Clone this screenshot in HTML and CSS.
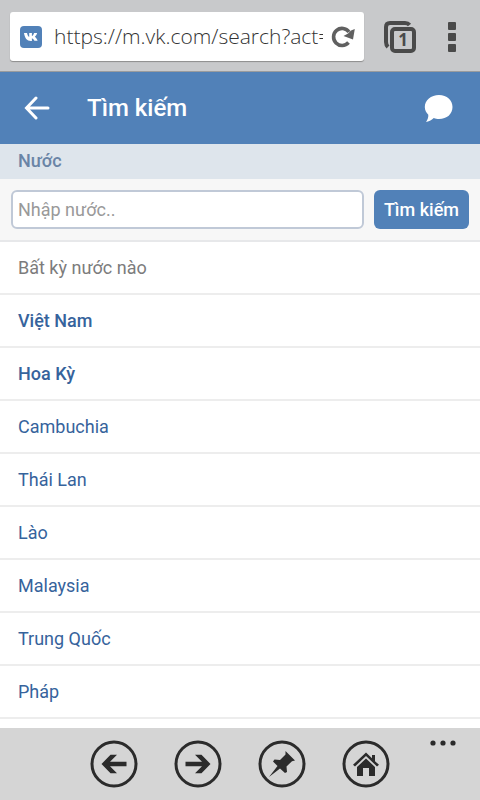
FILE: index.html
```html
<!DOCTYPE html>
<html lang="vi">
<head>
<meta charset="utf-8">
<meta name="viewport" content="width=device-width, initial-scale=1">
<title>Tìm kiếm</title>
<link rel="stylesheet" href="styles.css">
</head>
<body>
<div class="browser">
  <div class="address">
    <svg class="favicon" width="22" height="22" viewBox="0 0 22 22" aria-hidden="true">
      <rect width="22" height="22" rx="4" fill="#5181b8"/>
      <path d="M4 7h3c.5 2.400 1.300 3.600 2.200 4V7h2.700v3c1-.2 1.700-1.500 2.200-3h3c-.4 1.600-1.300 3-2.300 3.800 1.300.8 2.200 2.400 2.800 4h-3.200c-.5-1.200-1.300-2.200-2.500-2.600v2.800h-1C7 15 4.700 12 4 7z" fill="#fff"/>
    </svg>
    <input class="url" type="text" aria-label="Địa chỉ" value="https://m.vk.com/search?act=" readonly>
    <button class="plain" type="button" aria-label="Tải lại">
      <svg width="24" height="22" viewBox="0 0 24 22" aria-hidden="true">
        <path d="M17.500 16.500A8.500 8.500 0 1 1 18 6" fill="none" stroke="#606060" stroke-width="3.600"/>
        <path d="M23.800 3L22 13.500L12.500 10L17 7.500L20 4.500z" fill="#606060"/>
      </svg>
    </button>
  </div>
  <button class="plain tabs" type="button" aria-label="Thẻ">
    <svg width="32" height="32" viewBox="0 0 32 32" aria-hidden="true">
      <path d="M4 26Q2 24 2 21V6Q2 2 6 2H21Q24 2 25.500 4" fill="none" stroke="#4a4a4a" stroke-width="4"/>
      <rect x="8" y="8" width="22" height="22" rx="3" fill="#c8c9cb" stroke="#4a4a4a" stroke-width="4"/>
    </svg>
    <span class="count">1</span>
  </button>
  <button class="plain" type="button" aria-label="Menu">
    <svg width="8" height="30" viewBox="0 0 8 30" fill="#4a4a4a" aria-hidden="true">
      <rect width="8" height="8" rx="1"/><rect y="11" width="8" height="8" rx="1"/><rect y="22" width="8" height="8" rx="1"/>
    </svg>
  </button>
</div>
<header class="header">
  <a class="icon" href="#" aria-label="Quay lại">
    <svg width="26" height="24" viewBox="0 0 26 24" fill="none" stroke="#fff" stroke-width="3" stroke-linecap="round" aria-hidden="true"><path d="M24 12H3M12 2L2.500 12L12 22"/></svg>
  </a>
  <h1 class="title">Tìm kiếm</h1>
  <a class="icon" href="#" aria-label="Tin nhắn">
    <svg width="30" height="28" viewBox="0 0 30 28" aria-hidden="true"><path d="M15 1C23 1 28.500 6 28.500 13S23 25 15 25C13 25 11.500 24.700 9.800 24C7.500 26.300 4.500 27.500 2 28C3.300 26 4.600 23.500 4.300 20.700C2.200 18.500 .8 16 .8 13C.8 6 7 1 15 1z" fill="#fff"/></svg>
  </a>
</header>
<main class="content">
  <h2 class="section"><label for="country">Nước</label></h2>
  <form class="search">
    <input class="field" id="country" type="text" placeholder="Nhập nước..">
    <button class="submit" type="button">Tìm kiếm</button>
  </form>
  <nav class="list">
    <a class="row any" href="#">Bất kỳ nước nào</a>
    <a class="row main" href="#">Việt Nam</a>
    <a class="row main" href="#">Hoa Kỳ</a>
    <a class="row" href="#">Cambuchia</a>
    <a class="row" href="#">Thái Lan</a>
    <a class="row" href="#">Lào</a>
    <a class="row" href="#">Malaysia</a>
    <a class="row" href="#">Trung Quốc</a>
    <a class="row" href="#">Pháp</a>
  </nav>
</main>
<footer class="appbar">
  <button class="plain" type="button" aria-label="Lùi">
    <svg width="48" height="48" viewBox="0 0 48 48" aria-hidden="true"><circle cx="24" cy="24" r="22" class="ring"/><path d="M11.500 24L20.500 14.800H27L20 21.800H36.500V26.200H20L27 33.200H20.500z"/></svg>
  </button>
  <button class="plain" type="button" aria-label="Tiến">
    <svg width="48" height="48" viewBox="0 0 48 48" aria-hidden="true"><circle cx="24" cy="24" r="22" class="ring"/><path d="M36.500 24L27.500 14.800H21L28 21.800H11.500V26.200H28L21 33.200H27.500z"/></svg>
  </button>
  <button class="plain" type="button" aria-label="Ghim">
    <svg width="48" height="48" viewBox="0 0 48 48" aria-hidden="true"><circle cx="24" cy="24" r="22" class="ring"/><path d="M27.500 11L37 20.500L34 21.200L28.500 26.500L29 32L27 33L22 28.500L11 37L19.500 26L15 21.500L16.500 19.500L22 20L27.500 14.500z"/></svg>
  </button>
  <button class="plain" type="button" aria-label="Trang chủ">
    <svg width="48" height="48" viewBox="0 0 48 48" aria-hidden="true"><circle cx="24" cy="24" r="22" class="ring"/><path d="M24 12.600L30 18.300V15H33V21.200L37 24.800L35 26.500L24 16L13 26.500L11 24.800z"/><path d="M24 18.600L33 27V36H27V28H21V36H15V27z"/></svg>
  </button>
  <button class="plain more" type="button" aria-label="Thêm">
    <svg width="26" height="6" viewBox="0 0 26 6" aria-hidden="true"><circle cx="3" cy="3" r="2.600"/><circle cx="13" cy="3" r="2.600"/><circle cx="23" cy="3" r="2.600"/></svg>
  </button>
</footer>
</body>
</html>
```
FILE: styles.css
```css
* {
  box-sizing: border-box;
}

body {
  margin: 0;
  min-height: 100vh;
  display: flex;
  flex-direction: column;
  background: #fff;
  font-family: Roboto, "Liberation Sans", sans-serif;
  font-size: 18px;
  line-height: 24px;
}

svg {
  display: block;
}

.plain {
  padding: 0;
  border: 0;
  background: none;
  flex: none;
}

.browser {
  display: flex;
  align-items: center;
  gap: 32px;
  padding: 12px 24px 10px 10px;
  background: #c8c9cb;
  border-bottom: 1px solid #999b9d;
}

.address {
  flex: 1;
  min-width: 0;
  display: flex;
  align-items: center;
  margin-right: -12px;
  padding: 0 9px 0 10px;
  background: #fff;
  border-radius: 3px;
  box-shadow: 0 1px 1px #8c8c8c;
}

.favicon {
  flex: none;
}

.url {
  flex: 1;
  min-width: 0;
  height: 49px;
  margin: 0 8px 0 12px;
  padding: 0 0 2px;
  border: 0;
  background: none;
  color: #333;
  font: 300 21px "Open Sans", "Noto Sans", sans-serif;
}

.tabs {
  position: relative;
}

.count {
  position: absolute;
  inset: 6px 0 0 6px;
  color: #4a4a4a;
  font: 700 17px/26px "Open Sans", sans-serif;
  text-align: center;
}

.header {
  display: flex;
  align-items: center;
  height: 72px;
  padding: 0 26px 0 24px;
  background: #5181b8;
  color: #fff;
}

.title {
  flex: 1;
  margin: 0 0 0 37px;
  font-size: 24px;
  font-weight: 500;
  line-height: 32px;
}

.content {
  flex: 1;
}

.section {
  margin: 0;
  padding: 5px 18px 6px;
  background: #dee5ec;
  color: #6a84a6;
  font-size: 18px;
  font-weight: 500;
}

.search {
  display: flex;
  gap: 10px;
  padding: 11px;
  background: #f7f7f7;
  border-bottom: 2px solid #e7e8ea;
}

.field {
  flex: 1;
  min-width: 0;
  height: 39px;
  padding: 0 5px;
  border: 2px solid #c0c9d7;
  border-radius: 6px;
  background: #fff;
  font: inherit;
}

.field::placeholder {
  color: #999;
}

.submit {
  padding: 0 10px;
  border: 0;
  border-radius: 6px;
  background: #5181b8;
  color: #fff;
  font: inherit;
  font-weight: 500;
}

.row {
  display: block;
  padding: 14px 18px 13px;
  border-bottom: 2px solid #ededed;
  color: #36639c;
  text-decoration: none;
}

.any {
  color: #7c7c7c;
}

.main {
  font-weight: 500;
}

.appbar {
  position: relative;
  display: flex;
  justify-content: center;
  gap: 36px;
  padding: 12px 0;
  background: #d5d5d5;
  fill: #2b2b2b;
}

.ring {
  fill: none;
  stroke: #2b2b2b;
  stroke-width: 3;
}

.more {
  position: absolute;
  top: 12px;
  right: 24px;
}
```
